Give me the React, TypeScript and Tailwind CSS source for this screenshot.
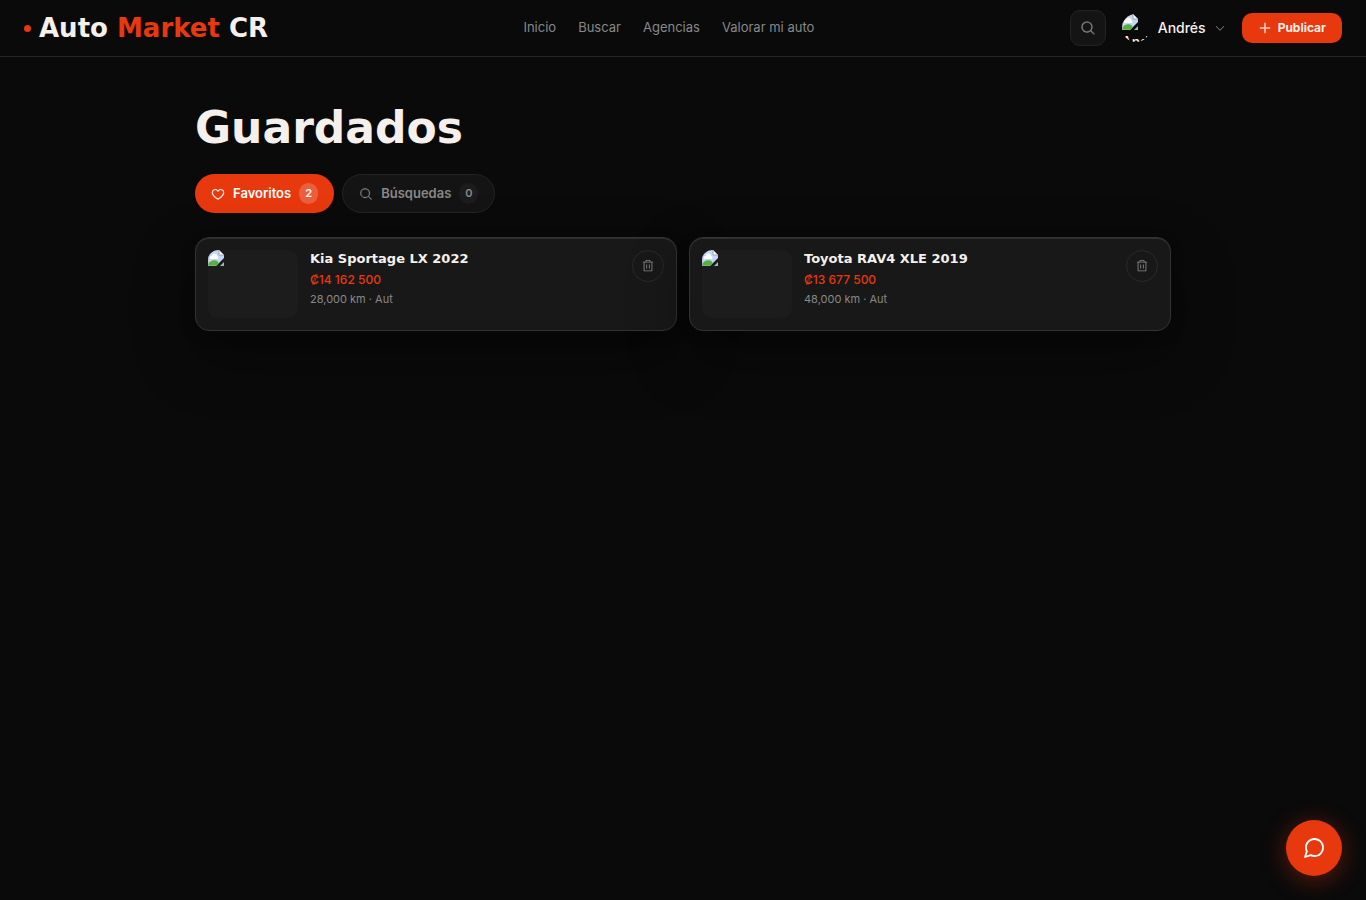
import { useState } from 'react'
import { FiMessageCircle } from 'react-icons/fi'
import { PiCaretDown, PiHeart, PiMagnifyingGlass, PiPlus, PiTrash } from 'react-icons/pi'

const navLinks = ['Inicio', 'Buscar', 'Agencias', 'Valorar mi auto']

const favorites = [
  { id: 'kia', title: 'Kia Sportage LX 2022', price: '₡14 162 500', details: '28,000 km · Aut' },
  { id: 'toyota', title: 'Toyota RAV4 XLE 2019', price: '₡13 677 500', details: '48,000 km · Aut' },
]

function MissingImage() {
  return (
    <svg className="block h-4 w-4 shrink-0" viewBox="0 0 16 16" aria-hidden="true">
      <path d="M0 0h11l5 5v3L8 16H0z" fill="#c6d6f7" />
      <path d="M2 9a2 2 0 0 1 2-3 2.500 2.500 0 0 1 5 0 1.800 1.800 0 0 1 1 3z" fill="#fff" />
      <path d="M0 16v-2c2-3 5-4.500 8-3.500 1.200.3 2 .9 2.700 2.700L8 16z" fill="#53b13c" />
      <path d="M11 0l5 5h-5z" fill="#fff" stroke="#8f949c" strokeWidth="0.8" />
      <path d="M0 0v16h8" fill="none" stroke="#a7b1c4" strokeWidth="1" />
      <path d="M16 12v4h-4z" fill="#9db8a4" />
    </svg>
  )
}

function Header() {
  return (
    <header className="flex h-[57px] items-center justify-between border-b border-[#252525] px-6">
      <a href="#" className="flex items-center gap-2 whitespace-nowrap font-['DejaVu_Sans',sans-serif] text-[26px] leading-8 font-bold">
        <span className="h-[7px] w-[7px] rounded-full bg-[#e8380d]" />
        <span>
          Auto <span className="text-[#e8380d]">Market</span> CR
        </span>
      </a>

      <nav className="flex items-center gap-[22px] text-[13px] text-[#888]">
        {navLinks.map((label) => (
          <a key={label} href="#">
            {label}
          </a>
        ))}
      </nav>

      <div className="flex items-center gap-4">
        <button aria-label="Buscar" className="flex h-9 w-9 items-center justify-center rounded-[10px] border border-[#242424] bg-[#141414] text-[#888]">
          <PiMagnifyingGlass className="h-4 w-4" strokeWidth={4} />
        </button>
        <button className="flex items-center gap-2 text-sm font-medium">
          <span className="h-7 w-7 overflow-hidden rounded-full text-left leading-6">
            <MissingImage />
            <span className="block" aria-hidden="true">Andrés</span>
          </span>
          <span>Andrés</span>
          <PiCaretDown className="h-3 w-3 text-[#888]" />
        </button>
        <button className="flex h-[30px] items-center gap-1.5 rounded-[10px] bg-[#e8380d] px-4 text-xs font-bold">
          <PiPlus className="h-3.5 w-3.5" strokeWidth={6} />
          Publicar
        </button>
      </div>
    </header>
  )
}

export default function App() {
  const [tab, setTab] = useState('favoritos')
  const [items, setItems] = useState(favorites)

  const tabs = [
    { id: 'favoritos', label: 'Favoritos', count: items.length, icon: PiHeart },
    { id: 'busquedas', label: 'Búsquedas', count: 0, icon: PiMagnifyingGlass },
  ]

  return (
    <div className="min-h-screen bg-[#0a0a0a] font-[Inter,sans-serif] text-[#f5f0eb]">
      <Header />

      <main className="mx-auto max-w-[1024px] px-6 pt-12">
        <h1 className="font-['DejaVu_Sans',sans-serif] text-[44px] leading-[45px] font-bold">Guardados</h1>

        <div className="mt-6 flex gap-2">
          {tabs.map(({ id, label, count, icon: Icon }) => (
            <button
              key={id}
              aria-pressed={tab === id}
              onClick={() => setTab(id)}
              className={`flex h-[39px] items-center gap-2 rounded-full px-4 text-[13px] font-semibold ${
                tab === id ? 'bg-[#e8380d] text-white' : 'border border-[#242424] bg-[#141414] text-[#888]'
              }`}
            >
              <Icon className="h-3.5 w-3.5" strokeWidth={4} />
              {label}
              <span
                className={`flex h-[21px] min-w-[19px] items-center justify-center rounded-full text-[11px] ${
                  tab === id ? 'bg-white/20' : 'bg-[#1c1c1c]'
                }`}
              >
                {count}
              </span>
            </button>
          ))}
        </div>

        {tab === 'favoritos' && (
          <div className="mt-6 grid grid-cols-2 gap-3">
            {items.map((item) => (
              <article
                key={item.id}
                className="flex items-start gap-3 rounded-[14px] border border-[#333] bg-[#181818] p-3 shadow-[0_24px_60px_rgba(0,0,0,0.4),0_4px_16px_rgba(0,0,0,0.1),inset_0_1px_0_rgba(255,255,255,0.1)]"
              >
                <div className="h-[68px] w-[90px] shrink-0 overflow-hidden rounded-[10px] bg-[#1c1c1c]">
                  <MissingImage />
                </div>
                <div className="min-w-0 flex-1">
                  <h2 className="truncate font-['DejaVu_Sans',sans-serif] text-[13px] leading-[18px] font-bold">{item.title}</h2>
                  <p className="mt-0.5 text-xs leading-5 font-medium text-[#e8380d]">{item.price}</p>
                  <p className="text-[11px] leading-[18px] text-[#888]">{item.details}</p>
                </div>
                <button
                  aria-label={`Eliminar ${item.title}`}
                  onClick={() => setItems(items.filter(({ id }) => id !== item.id))}
                  className="flex h-8 w-8 shrink-0 items-center justify-center rounded-full border border-[#292929] text-[#888]"
                >
                  <PiTrash className="h-3.5 w-3.5" />
                </button>
              </article>
            ))}
          </div>
        )}
      </main>

      <button
        aria-label="Abrir chat"
        className="fixed right-6 bottom-6 flex h-14 w-14 items-center justify-center rounded-full bg-[#e8380d] text-white shadow-[0_4px_24px_rgba(232,56,13,0.4)]"
      >
        <FiMessageCircle className="h-6 w-6" strokeWidth={1.8} />
      </button>
    </div>
  )
}
